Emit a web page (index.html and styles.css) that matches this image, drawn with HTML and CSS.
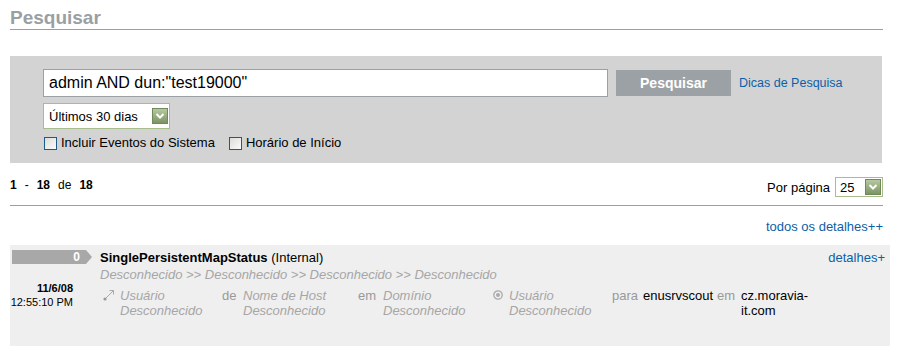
FILE: index.html
```html
<!DOCTYPE html>
<html lang="pt">
<head>
  <meta charset="UTF-8">
  <title>Pesquisar</title>
  <link rel="stylesheet" href="styles.css">
</head>

<body>
  <div class="page">
    <h1 class="page-title">Pesquisar</h1>

    <div class="search-panel">
      <div class="search-row">
        <input type="text" class="query" value='admin AND dun:"test19000"' />
        <button class="search-btn">Pesquisar</button>
        <a href="#" class="link tips">Dicas de Pesquisa</a>
      </div>

      <div class="select range">
        <span>Últimos 30 dias</span>
        <span class="select-arrow">
          <svg width="10" height="8" viewBox="0 0 10 8"><path d="M1.5 2 L5 5.5 L8.5 2" fill="none" stroke="#fff" stroke-width="2"/></svg>
        </span>
      </div>

      <div class="options">
        <label class="check"><span class="box"></span>Incluir Eventos do Sistema</label>
        <label class="check"><span class="box"></span>Horário de Início</label>
      </div>
    </div>

    <div class="pager">
      <div class="count">
        <b>1</b><span>-</span><b>18</b><span>de</span><b>18</b>
      </div>
      <div class="per-page">
        <span>Por página</span>
        <div class="select small">
          <span>25</span>
          <span class="select-arrow">
            <svg width="10" height="8" viewBox="0 0 10 8"><path d="M1.5 2 L5 5.5 L8.5 2" fill="none" stroke="#fff" stroke-width="2"/></svg>
          </span>
        </div>
      </div>
    </div>

    <div class="all-details"><a href="#" class="link">todos os detalhes++</a></div>

    <div class="result">
      <div class="result-left">
        <div class="badge">0</div>
        <div class="date">
          <b>11/6/08</b>
          <span>12:55:10 PM</span>
        </div>
      </div>

      <div class="result-main">
        <div class="event-name"><b>SinglePersistentMapStatus</b> (Internal)</div>
        <div class="crumbs">Desconhecido &gt;&gt; Desconhecido &gt;&gt; Desconhecido &gt;&gt; Desconhecido</div>

        <div class="fields">
          <div class="cell with-icon first">
            <svg class="ico" width="12" height="12" viewBox="0 0 12 12">
              <path d="M2 10 L10.5 1.5 M6.5 1.5 H10.5 V5.5" fill="none" stroke="#aaa" stroke-width="1"/>
              <circle cx="2" cy="10" r="1.6" fill="#999"/>
            </svg>
            <i>Usuário Desconhecido</i>
          </div>
          <div class="cell word">de</div>
          <div class="cell"><i>Nome de Host Desconhecido</i></div>
          <div class="cell word">em</div>
          <div class="cell"><i>Domínio Desconhecido</i></div>
          <div class="cell with-icon">
            <svg class="ico radio" width="10" height="10" viewBox="0 0 10 10">
              <circle cx="5" cy="5" r="4.2" fill="none" stroke="#aaa" stroke-width="1.3"/>
              <circle cx="5" cy="5" r="2" fill="#aaa"/>
            </svg>
            <i>Usuário Desconhecido</i>
          </div>
          <div class="cell word">para</div>
          <div class="cell value">enusrvscout</div>
          <div class="cell word">em</div>
          <div class="cell value">cz.moravia-it.com</div>
        </div>
      </div>

      <div class="result-right">
        <a href="#" class="link">detalhes+</a>
      </div>
    </div>
  </div>
</body>
</html>
```

FILE: styles.css
```css
body {
  font-family: "Liberation Sans", Arial, sans-serif;
  font-size: 13px;
  color: #000;
  background: #fff;
  margin: 0;
  padding: 7px 0 0 10px;
}
.page {
  width: 873px;
}
.link {
  color: #0b5fa8;
  text-decoration: none;
}

/* title */
.page-title {
  margin: 0;
  font-size: 19px;
  line-height: 22px;
  font-weight: bold;
  color: #9a9fa4;
  border-bottom: 1px solid #9a9fa4;
}

/* search panel */
.search-panel {
  width: 872px;
  margin-top: 26px;
  background: #d3d3d3;
  padding: 13px 0 12px 33px;
  box-sizing: border-box;
}
.search-row {
  display: flex;
  align-items: center;
  height: 28px;
}
.query {
  width: 565px;
  height: 28px;
  box-sizing: border-box;
  margin: 0;
  padding: 0 5px;
  border: 1px solid #9aa0a6;
  background: #fff;
  font-family: "Liberation Sans", Arial, sans-serif;
  font-size: 16px;
  color: #000;
  outline: none;
}
.search-btn {
  width: 115px;
  height: 26px;
  margin-left: 8px;
  border: none;
  background: #9ca1a6;
  color: #fff;
  font-family: "Liberation Sans", Arial, sans-serif;
  font-size: 14px;
  font-weight: bold;
  padding: 0;
}
.tips {
  margin-left: 8px;
  font-size: 12.5px;
}

/* fake selects */
.select {
  display: flex;
  align-items: center;
  justify-content: space-between;
  box-sizing: border-box;
  border: 1px solid #a7bd8b;
  background: #fff;
  padding: 0 1px 0 5px;
}
.select.range {
  width: 127px;
  height: 26px;
  margin-top: 6px;
}
.select.small {
  width: 48px;
  height: 20px;
  margin-left: 5px;
  padding-left: 4px;
}
.select-arrow {
  width: 16px;
  height: 16px;
  box-sizing: border-box;
  border: 1px solid #6f8a58;
  background: linear-gradient(#b6c8a0, #7c9564);
  display: flex;
  align-items: center;
  justify-content: center;
}
.select-arrow svg {
  display: block;
}

/* checkboxes */
.options {
  display: flex;
  margin-top: 6px;
  line-height: 16px;
  padding-left: 1px;
}
.check {
  display: flex;
  align-items: center;
  margin-right: 14px;
}
.check .box {
  width: 13px;
  height: 13px;
  box-sizing: border-box;
  border: 1px solid #1f5a8c;
  background: linear-gradient(135deg, #dcdcd7, #fbfbfb);
  margin-right: 4px;
}

/* pager */
.pager {
  display: flex;
  justify-content: space-between;
  align-items: flex-start;
  padding: 14px 0 8px 0;
  border-bottom: 1px solid #9a9fa4;
}
.count {
  font-size: 12px;
  line-height: 15px;
  margin-top: 1px;
}
.count span {
  margin: 0 8px;
}
.per-page {
  display: flex;
  align-items: center;
  height: 20px;
}

.all-details {
  text-align: right;
  line-height: 16px;
  margin: 13px 0 10px 0;
}

/* result row */
.result {
  display: flex;
  width: 880px;
  height: 101px;
  box-sizing: border-box;
  background: #efefef;
  padding: 5px 5px 0 2px;
}
.result-left {
  width: 88px;
  flex-shrink: 0;
}
.badge {
  width: 80px;
  height: 14px;
  box-sizing: border-box;
  background: #a8a8a8;
  clip-path: polygon(0 0, 74px 0, 80px 50%, 74px 100%, 0 100%);
  color: #fff;
  font-size: 12px;
  font-weight: bold;
  line-height: 14px;
  text-align: right;
  padding-right: 12px;
}
.date {
  width: 61px;
  margin-top: 17px;
  text-align: right;
  font-size: 11px;
  line-height: 14px;
  white-space: nowrap;
  display: flex;
  flex-direction: column;
  align-items: flex-end;
}
.result-main {
  flex: 1;
}
.event-name {
  line-height: 16px;
}
.crumbs {
  margin-top: 1px;
  line-height: 15px;
  font-style: italic;
  color: #a6a6a6;
}
.fields {
  display: grid;
  grid-template-columns: 122px 21px 115px 25px 110px 119px 31px 74px 24px 70px;
  margin-top: 6px;
  line-height: 15px;
}
.cell {
  color: #a6a6a6;
}
.cell i {
  display: block;
}
.cell.word {
  color: #999;
}
.cell.value {
  color: #000;
}
.with-icon {
  display: flex;
  align-items: flex-start;
}
.with-icon.first {
  padding-left: 3px;
}
.ico {
  flex-shrink: 0;
  margin: 1px 5px 0 0;
}
.ico.radio {
  margin: 2px 6px 0 0;
}
.result-right {
  line-height: 16px;
}
```
